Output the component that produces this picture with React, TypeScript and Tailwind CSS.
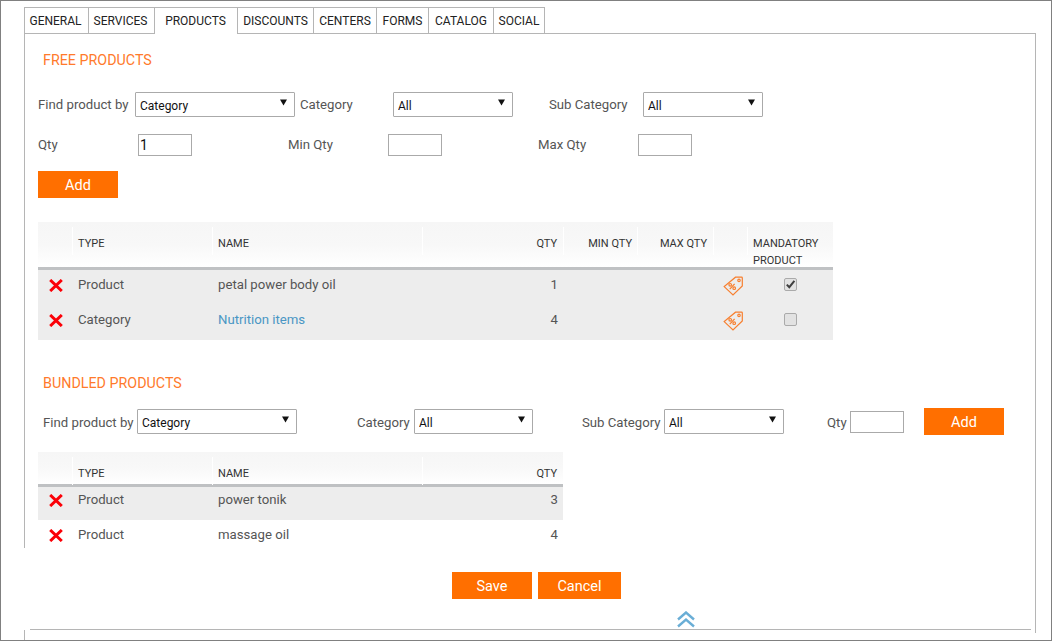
const tabs = [
  { label: 'GENERAL', width: 'w-[65px] pr-[2px]' },
  { label: 'SERVICES', width: 'w-[66px] pr-[2px]' },
  { label: 'PRODUCTS', width: 'w-[83px] pr-[1px]', active: true },
  { label: 'DISCOUNTS', width: 'w-[76px]' },
  { label: 'CENTERS', width: 'w-[63px]' },
  { label: 'FORMS', width: 'w-[52px]' },
  { label: 'CATALOG', width: 'w-[65px]' },
  { label: 'SOCIAL', width: 'w-[51px]' },
];

const freeCols = 'grid grid-cols-[34px_140px_210px_141px_74px_76px_34px_86px]';
const bundledCols = 'grid grid-cols-[34px_140px_210px_141px]';

function RemoveIcon() {
  return (
    <svg width="14" height="13" viewBox="0 0 14 13" className="ml-[11px]">
      <path d="M1.2 1 12.8 12M12.8 1 1.2 12" stroke="#fb0007" strokeWidth="3" fill="none" />
    </svg>
  );
}

function DiscountTag() {
  return (
    <svg width="20" height="20" viewBox="0 0 20 20" fill="none" stroke="#f77f2f" strokeWidth="1.2" className="ml-[10px]">
      <path d="M12.5 1.2 18.6 1.2Q19.3 1.2 19.3 2V10L10 19 1.2 10.6Z" />
      <circle cx="16" cy="4.4" r="1.2" />
      <circle cx="7.2" cy="8.8" r="1.3" />
      <circle cx="11.2" cy="12.2" r="1.3" />
      <path d="M11.6 7.8 6.8 13.2" />
    </svg>
  );
}

function Checkbox({ checked }: { checked?: boolean }) {
  return (
    <span className="mx-auto -mt-[2px] flex h-[13px] w-[13px] items-center justify-center rounded-[2px] border border-[#aaaaaa] bg-[#e2e2e2]">
      {checked && (
        <svg width="11" height="11" viewBox="0 0 11 11">
          <path d="M1.8 5.6 4.3 8.2 9.4 1.8" stroke="#3f3f3f" strokeWidth="2" fill="none" />
        </svg>
      )}
    </span>
  );
}

function SelectBox({ value, width }: { value: string; width: string }) {
  return (
    <div className={`relative h-[25px] shrink-0 ${width}`}>
      <select
        defaultValue={value}
        className="block h-[25px] w-full appearance-none rounded-[1px] border border-[#aaaaaa] bg-white pl-[4px] pt-[2px] text-[12px] text-[#111]"
      >
        <option>{value}</option>
      </select>
      <svg width="7" height="7" viewBox="0 0 7 7" className="pointer-events-none absolute right-[8px] top-[7px]">
        <path d="M0 0.5H7L3.5 6.5Z" fill="#111" />
      </svg>
    </div>
  );
}

function QtyInput({ value }: { value?: string }) {
  return (
    <input
      defaultValue={value}
      className="h-[22px] w-[54px] shrink-0 border border-[#aaaaaa] bg-white px-[1px] text-[14px] text-[#111]"
    />
  );
}

function OrangeButton({ label, width = 'w-[80px]' }: { label: string; width?: string }) {
  return (
    <button className={`flex h-[27px] ${width} shrink-0 items-center justify-center bg-[#ff6f00] pt-[2px] text-[14.5px] text-white`}>
      {label}
    </button>
  );
}

function HeaderCell({ children, right, divider = true, tight }: { children?: React.ReactNode; right?: boolean; divider?: boolean; tight?: boolean }) {
  return (
    <div
      className={`mt-[5px] h-[28px] pt-[3px] leading-[28px] ${divider ? 'border-l border-white' : ''} ${right ? 'text-right' : 'pl-[5px]'} ${right && tight ? 'pr-[5px]' : ''} ${right && !tight ? 'pr-[6px]' : ''}`}
    >
      {children}
    </div>
  );
}

export default function App() {
  return (
    <div className="relative h-[641px] w-[1052px] overflow-hidden border border-[#808080] bg-white font-['Roboto','Liberation_Sans',sans-serif] text-[13.2px] text-[#555]">
      <div className="ml-[23px] w-[1012px]">
        <div className="box-content flex h-[26px] pt-[6px]">
          {tabs.map((tab) => (
            <div
              key={tab.label}
              className={`relative flex h-[26px] items-center justify-center border-t border-r border-[#b5b5b5] bg-white text-[12px] text-[#222] first:border-l ${tab.width} ${
                tab.active ? 'z-10 h-[27px]' : ''
              }`}
            >
              {tab.label}
            </div>
          ))}
        </div>

        <div className="h-[600px] border-t border-r border-[#b5b5b5]">
          <div className="h-[514px] border-l border-[#b5b5b5] pl-[13px]">
            <h2 className="ml-[5px] pt-[18px] text-[14.3px] leading-[17px] text-[#ff7a2b]">FREE PRODUCTS</h2>

            <div className="mt-[23px] flex h-[25px] items-center">
              <span className="w-[97px]">Find product by</span>
              <SelectBox value="Category" width="w-[160px]" />
              <span className="ml-[5px] w-[93px]">Category</span>
              <SelectBox value="All" width="w-[120px]" />
              <span className="ml-[36px] w-[94px]">Sub Category</span>
              <SelectBox value="All" width="w-[120px]" />
            </div>

            <div className="mt-[17px] flex h-[22px] items-center">
              <span className="w-[100px]">Qty</span>
              <QtyInput value="1" />
              <span className="ml-[96px] w-[100px]">Min Qty</span>
              <QtyInput />
              <span className="ml-[96px] w-[100px]">Max Qty</span>
              <QtyInput />
            </div>

            <div className="mt-[15px]">
              <OrangeButton label="Add" />
            </div>

            <div className="mt-[24px] w-[795px]">
              <div className={`${freeCols} h-[48px] border-b-[3px] border-[#bfc1c3] bg-gradient-to-b from-[#f6f6f6] via-[#f8f8f8] to-white text-[11px] text-[#333]`}>
                <HeaderCell divider={false} />
                <HeaderCell>TYPE</HeaderCell>
                <HeaderCell>NAME</HeaderCell>
                <HeaderCell right>QTY</HeaderCell>
                <HeaderCell right tight>MIN QTY</HeaderCell>
                <HeaderCell right>MAX QTY</HeaderCell>
                <HeaderCell />
                <div className="mt-[5px] h-[28px] border-l border-white pl-[5px] pt-[8px] leading-[17px]">
                  MANDATORY
                  <br />
                  PRODUCT
                </div>
              </div>
              <div className={`${freeCols} h-[35px] items-center bg-[#ededed] pb-[4px]`}>
                <RemoveIcon />
                <span className="pb-[2px] pl-[6px]">Product</span>
                <span className="pb-[2px] pl-[6px]">petal power body oil</span>
                <span className="pb-[2px] pr-[5px] text-right">1</span>
                <span />
                <span />
                <DiscountTag />
                <Checkbox checked />
              </div>
              <div className={`${freeCols} h-[35px] items-center bg-[#ededed] pb-[4px]`}>
                <RemoveIcon />
                <span className="pb-[2px] pl-[6px]">Category</span>
                <span className="pb-[2px] pl-[6px] text-[#4a96c4]">Nutrition items</span>
                <span className="pb-[2px] pr-[5px] text-right">4</span>
                <span />
                <span />
                <DiscountTag />
                <Checkbox />
              </div>
            </div>

            <h2 className="ml-[5px] mt-[35px] text-[14.3px] leading-[17px] text-[#ff7a2b]">BUNDLED PRODUCTS</h2>

            <div className="mt-[16px] flex h-[27px] items-center">
              <span className="ml-[5px] w-[94px] pt-[2px]">Find product by</span>
              <SelectBox value="Category" width="w-[160px]" />
              <span className="ml-[60px] w-[57px] pt-[2px]">Category</span>
              <SelectBox value="All" width="w-[119px]" />
              <span className="ml-[49px] w-[82px] pt-[2px]">Sub Category</span>
              <SelectBox value="All" width="w-[120px]" />
              <span className="ml-[43px] w-[23px] pt-[2px]">Qty</span>
              <QtyInput />
              <span className="ml-[20px]">
                <OrangeButton label="Add" />
              </span>
            </div>

            <div className="mt-[17px] w-[525px]">
              <div className={`${bundledCols} h-[35px] border-b-[3px] border-[#bfc1c3] bg-gradient-to-b from-[#f6f6f6] via-[#f8f8f8] to-white text-[11px] text-[#333]`}>
                <HeaderCell divider={false} />
                <HeaderCell>TYPE</HeaderCell>
                <HeaderCell>NAME</HeaderCell>
                <HeaderCell right>QTY</HeaderCell>
              </div>
              <div className={`${bundledCols} h-[33px] items-center bg-[#ededed] pb-[7px]`}>
                <RemoveIcon />
                <span className="pl-[6px]">Product</span>
                <span className="pl-[6px]">power tonik</span>
                <span className="pr-[5px] text-right">3</span>
              </div>
              <div className={`${bundledCols} h-[30px] items-center`}>
                <RemoveIcon />
                <span className="pl-[6px]">Product</span>
                <span className="pl-[6px]">massage oil</span>
                <span className="pr-[5px] text-right">4</span>
              </div>
            </div>
          </div>

          <div className="mt-[24px] flex justify-center gap-[6px] pl-[14px]">
            <OrangeButton label="Save" />
            <OrangeButton label="Cancel" width="w-[83px]" />
          </div>
        </div>
      </div>

      <svg width="18" height="17" viewBox="0 0 18 17" fill="none" stroke="#6aaed6" strokeWidth="2.4" className="absolute left-[676px] top-[610px]">
        <path d="M1 8.5 9 1.5 17 8.5" />
        <path d="M1 15.5 9 8.5 17 15.5" />
      </svg>
      <div className="absolute left-[29px] top-[628px] h-px w-[1001px] bg-[#b5b5b5]" />
      <div className="absolute left-[1032px] top-[632px] h-[4px] w-[4px] bg-white" />
      <div className="absolute left-[23px] top-[629px] h-[11px] w-px bg-[#b5b5b5]" />
    </div>
  );
}
